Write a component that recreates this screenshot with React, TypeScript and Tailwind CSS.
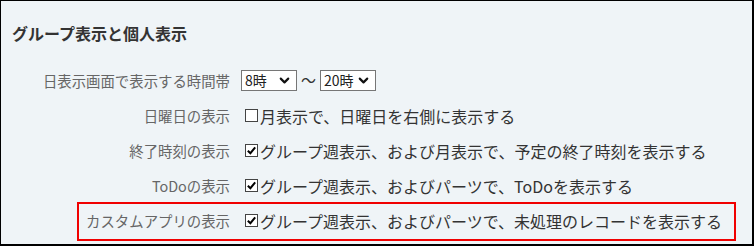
import { ChevronDown } from "lucide-react"

const font = { fontFamily: '"Noto Sans CJK JP", "Noto Sans", sans-serif' }

const Check = ({ checked }: { checked: boolean }) => (
	<span className="mr-[2px] inline-flex h-[13px] w-[13px] items-center justify-center border border-[#444] bg-white">
		{checked && (
			<svg viewBox="0 0 12 12" className="h-[11px] w-[11px]">
				<path d="M2 6.2 L4.8 9 L10 2.6" fill="none" stroke="#000" strokeWidth="2.2" />
			</svg>
		)}
	</span>
)

const FakeSelect = ({ value, width }: { value: string; width: string }) => (
	<div
		className={`flex h-[21px] items-center justify-between border border-[#767676] bg-white pl-[3px] pr-[4px] text-[14px] text-[#222] ${width}`}
	>
		<span>{value}</span>
		<ChevronDown size={15} strokeWidth={3.4} className="text-[#111]" />
	</div>
)

const Row = ({ label, children }: { label: string; children: React.ReactNode }) => (
	<div className="flex h-[35px] items-center">
		<div className="w-[230px] pr-[1px] text-right text-[14.4px] text-[#666]">{label}</div>
		<div className="flex items-center pl-[14px] text-[16px] text-[#333]">{children}</div>
	</div>
)

export default function App() {
	return (
		<div
			style={font}
			className="box-border h-[246px] w-[754px] border-t border-l border-r-2 border-b-2 border-black bg-[#eff4f7]"
		>
			<h2 className="pl-[11px] pt-[20px] text-[16px] font-bold leading-[24px] text-[#333]">
				グループ表示と個人表示
			</h2>
			<div className="mt-[18px]">
				<Row label="日表示画面で表示する時間帯">
					<div className="-ml-[4px] flex items-center">
						<FakeSelect value="8時" width="w-[56px]" />
						<span className="mx-[4px] text-[15px]">〜</span>
						<FakeSelect value="20時" width="w-[56px]" />
					</div>
				</Row>
				<Row label="日曜日の表示">
					<Check checked={false} />
					月表示で、日曜日を右側に表示する
				</Row>
				<Row label="終了時刻の表示">
					<Check checked />
					グループ週表示、および月表示で、予定の終了時刻を表示する
				</Row>
				<Row label="ToDoの表示">
					<Check checked />
					グループ週表示、およびパーツで、ToDoを表示する
				</Row>
				<div className="relative">
					<Row label="カスタムアプリの表示">
						<Check checked />
						グループ週表示、およびパーツで、未処理のレコードを表示する
					</Row>
					<div className="pointer-events-none absolute left-[76px] top-[-1px] h-[39px] w-[659px] border-2 border-[#f00000]" />
				</div>
			</div>
		</div>
	)
}
